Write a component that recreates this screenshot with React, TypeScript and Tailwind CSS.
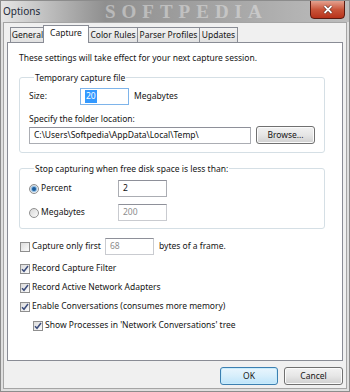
import React from 'react';

const font = "font-['Noto_Sans',sans-serif]";

function Check({ checked = false }: { checked?: boolean }) {
  return (
    <span className="flex h-[10px] w-[10px] shrink-0 items-center justify-center border border-[#8f8f8f] bg-gradient-to-br from-[#dcdcdc] to-[#fbfbfb]">
      {checked && (
        <svg width="8" height="8" viewBox="0 0 8 8">
          <path d="M1 4.2 L3 6.3 L7 1" fill="none" stroke="#3c4d7c" strokeWidth="1.5" />
        </svg>
      )}
    </span>
  );
}

function Radio({ checked = false }: { checked?: boolean }) {
  return (
    <span className="flex h-[10px] w-[10px] shrink-0 items-center justify-center rounded-full border border-[#8f8f8f] bg-gradient-to-br from-[#d8d8d8] to-[#fbfbfb]">
      {checked && <span className="h-[4px] w-[4px] rounded-full bg-[#1c5d9c] shadow-[0_0_1px_1px_#7fb4e0]" />}
    </span>
  );
}

function Field({ value, w, disabled = false, focus = false, selected = false }: { value: string; w: string; disabled?: boolean; focus?: boolean; selected?: boolean }) {
  return (
    <div
      className={`flex h-[17px] shrink-0 items-center whitespace-nowrap border px-[4px] ${w} ${
        focus ? 'border-[#7eb4ea]' : 'border-[#abadb3] border-t-[#8e9099]'
      } ${disabled ? 'border-[#c9cbd0] bg-[#ffffff] text-[#8d8d8d]' : 'bg-white text-[#111]'}`}
    >
      {selected ? <span className="bg-[#3399ff] px-[1px] text-white">{value}</span> : <span>{value}</span>}
    </div>
  );
}

function Button({ label, w, primary = false }: { label: string; w: string; primary?: boolean }) {
  return (
    <div
      className={`flex h-[18px] shrink-0 items-center justify-center rounded-[3px] border ${w} ${
        primary
          ? 'border-[#3c7fb1] bg-gradient-to-b from-[#e9f5fd] via-[#d7eefb] to-[#bde4fa] shadow-[inset_0_0_0_1px_#c8ecfc]'
          : 'border-[#707070] bg-gradient-to-b from-[#f2f2f2] via-[#e6e6e6] to-[#d0d0d0] shadow-[inset_0_0_0_1px_#fbfbfb]'
      }`}
    >
      {label}
    </div>
  );
}

const tabs = [
  { label: 'General', w: 'w-[35px]' },
  { label: 'Capture', w: 'w-[46px]', active: true },
  { label: 'Color Rules', w: 'w-[50px]' },
  { label: 'Parser Profiles', w: 'w-[63px]' },
  { label: 'Updates', w: 'w-[39px]' },
];

export default function App() {
  return (
    <div className={`${font} flex h-[392px] w-[350px] flex-col overflow-hidden whitespace-nowrap border border-[#8c8c8c] bg-[#dfdfdf] text-[8.5px] text-[#151515]`}>
      {/* Title bar */}
      <div className="relative flex h-[21px] shrink-0 items-center overflow-hidden bg-gradient-to-r from-[#e6e6e6] via-[#8f8f8f] via-30% to-[#bdbdbd] pl-[2px]">
        <span className="relative z-10 text-[10px] text-[#1e2a3a]">Options</span>
        <span className="absolute left-[104px] top-[1px] font-['Liberation_Serif',serif] text-[19px] font-bold leading-[19px] tracking-[6px] text-[#ececec] opacity-45">
          SOFTPEDIA
        </span>
        <div className="absolute right-[4px] top-[-1px] flex h-[19px] w-[35px] items-center justify-center rounded-b-[4px] border border-[#5b1a10] bg-gradient-to-b from-[#e3a08e] via-[#c9553a] to-[#b7321a]">
          <svg width="10" height="9" viewBox="0 0 10 9">
            <path d="M1.5 1 L8.5 8 M8.5 1 L1.5 8" stroke="#4a1a10" strokeWidth="3" />
            <path d="M1.5 1 L8.5 8 M8.5 1 L1.5 8" stroke="#fff" strokeWidth="1.8" />
          </svg>
        </div>
      </div>

      {/* Client area */}
      <div className="mx-[2px] mb-[2px] flex flex-1 flex-col border border-[#a5a5a5] bg-[#f0f0f0] pl-[3px] pr-[3px] pt-[2px]">
        {/* Tabs */}
        <div className="flex h-[17px] items-end pl-[3px]">
          {tabs.map((t) =>
            t.active ? (
              <div
                key={t.label}
                className={`relative z-10 -mb-px -mx-[1px] flex h-[18px] items-start justify-center border border-b-0 border-[#898c95] bg-white pt-[1px] ${t.w}`}
              >
                {t.label}
              </div>
            ) : (
              <div
                key={t.label}
                className={`-mr-px flex h-[15px] items-center justify-center border border-b-0 border-[#898c95] bg-gradient-to-b from-[#f2f2f2] to-[#e1e1e1] ${t.w}`}
              >
                {t.label}
              </div>
            )
          )}
        </div>

        {/* Panel */}
        <div className="flex h-[319px] flex-col border border-[#898c95] bg-white pl-[11px] pt-[7px]">
          <p className="leading-[15px]">These settings will take effect for your next capture session.</p>

          <fieldset className="mt-[5px] w-[306px] rounded-[3px] border border-[#d5dfe5] pb-[8px] pl-[9px]">
            <legend className="ml-[5px] px-[1px] leading-[15px]">Temporary capture file</legend>
            <div className="mt-[3px] flex items-center">
              <span className="w-[51px]">Size:</span>
              <Field value="20" w="w-[49px]" focus selected />
              <span className="ml-[5px]">Megabytes</span>
            </div>
            <p className="mt-[6px] leading-[15px]">Specify the folder location:</p>
            <div className="flex items-center gap-[5px]">
              <Field value="C:\Users\Softpedia\AppData\Local\Temp\" w="w-[222px]" />
              <Button label="Browse..." w="w-[59px]" />
            </div>
          </fieldset>

          <fieldset className="mt-[8px] w-[306px] rounded-[3px] border border-[#d5dfe5] pb-[7px] pl-[9px]">
            <legend className="ml-[5px] px-[1px] leading-[15px]">Stop capturing when free disk space is less than:</legend>
            <div className="mt-[4px] flex flex-col gap-[7px]">
              <div className="flex items-center">
                <span className="flex w-[89px] items-center gap-[2px]">
                  <Radio checked />
                  <span>Percent</span>
                </span>
                <Field value="2" w="w-[49px]" />
              </div>
              <div className="flex items-center">
                <span className="flex w-[89px] items-center gap-[2px]">
                  <Radio />
                  <span>Megabytes</span>
                </span>
                <Field value="200" w="w-[49px]" disabled />
              </div>
            </div>
          </fieldset>

          <div className="mt-[9px] flex items-center pl-[1px]">
            <Check />
            <span className="ml-[2px] w-[73px]">Capture only first</span>
            <Field value="68" w="w-[49px]" disabled />
            <span className="ml-[5px]">bytes of a frame.</span>
          </div>

          <div className="mt-[4px] flex h-[19px] items-center gap-[2px] pl-[1px]">
            <Check checked />
            <span>Record Capture Filter</span>
          </div>
          <div className="flex h-[19px] items-center gap-[2px] pl-[1px]">
            <Check checked />
            <span>Record Active Network Adapters</span>
          </div>
          <div className="flex h-[19px] items-center gap-[2px] pl-[1px]">
            <Check checked />
            <span>Enable Conversations (consumes more memory)</span>
          </div>
          <div className="flex h-[19px] items-center gap-[2px] pl-[14px]">
            <Check checked />
            <span>Show Processes in 'Network Conversations' tree</span>
          </div>
        </div>

        {/* Buttons */}
        <div className="mt-[6px] flex justify-end gap-[6px]">
          <Button label="OK" w="w-[58px]" primary />
          <Button label="Cancel" w="w-[59px]" />
        </div>
      </div>
    </div>
  );
}
